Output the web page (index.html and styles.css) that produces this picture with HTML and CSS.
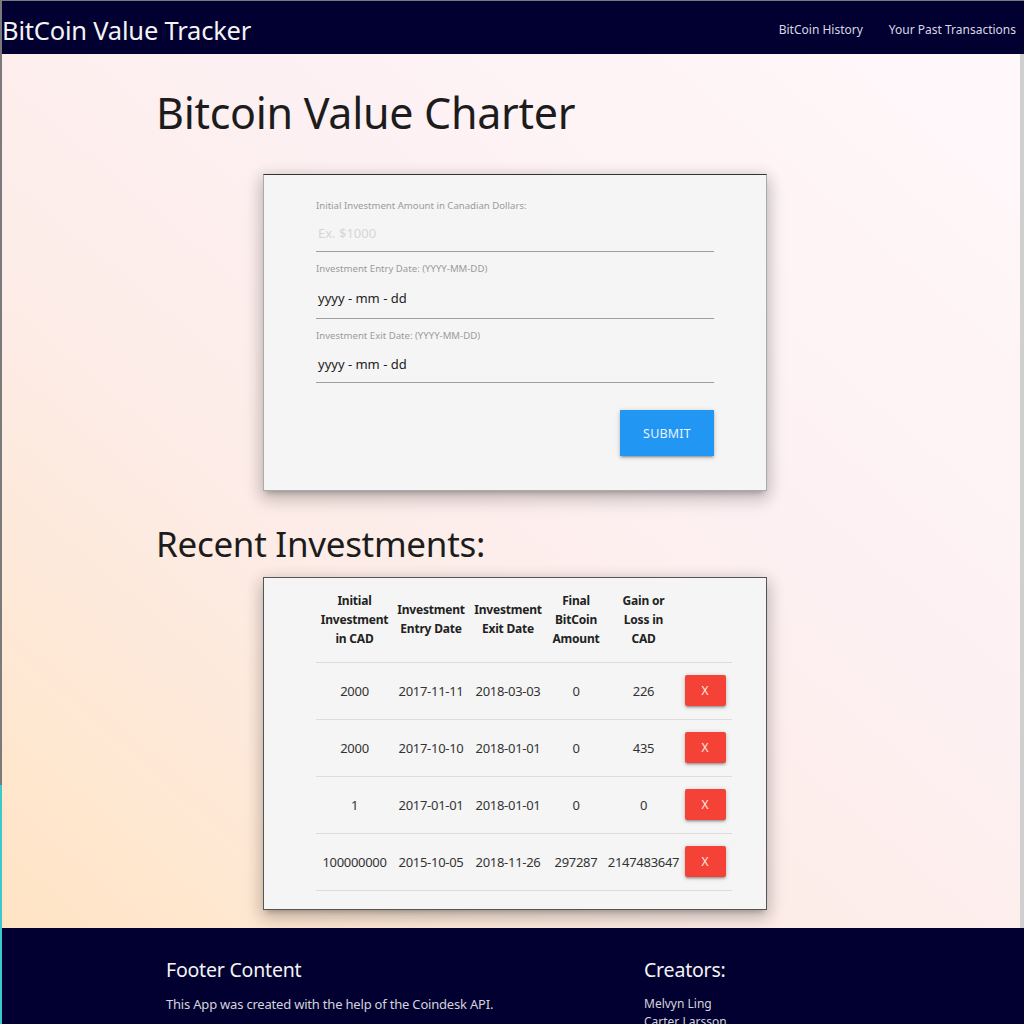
FILE: index.html
```html
<!DOCTYPE html>
<html lang="en">
<head>
<meta charset="utf-8">
<title>BitCoin Value Tracker</title>
<link rel="stylesheet" href="styles.css">
</head>
<body>
<div class="frame">
  <nav class="navbar">
    <a class="brand" href="#">BitCoin Value Tracker</a>
    <ul class="nav-links">
      <li><a href="#">BitCoin History</a></li>
      <li><a href="#">Your Past Transactions</a></li>
    </ul>
  </nav>
  <main class="main">
    <div class="container">
      <h1 class="title">Bitcoin Value Charter</h1>
      <form class="card form-card">
        <div class="field f1">
          <label class="field-label">Initial Investment Amount in Canadian Dollars:</label>
          <div class="field-input placeholder">Ex. $1000</div>
        </div>
        <div class="field f2">
          <label class="field-label">Investment Entry Date: (YYYY-MM-DD)</label>
          <div class="field-input">yyyy - mm - dd</div>
        </div>
        <div class="field f3">
          <label class="field-label">Investment Exit Date: (YYYY-MM-DD)</label>
          <div class="field-input">yyyy - mm - dd</div>
        </div>
        <div class="actions">
          <button type="button" class="btn btn-blue">SUBMIT</button>
        </div>
      </form>
      <h2 class="subtitle">Recent Investments:</h2>
      <div class="card table-card">
        <table class="inv-table">
          <colgroup>
            <col class="c1"><col class="c2"><col class="c3"><col class="c4"><col class="c5"><col class="c6">
          </colgroup>
          <thead>
            <tr>
              <th>Initial Investment in CAD</th>
              <th>Investment Entry Date</th>
              <th>Investment Exit Date</th>
              <th>Final BitCoin Amount</th>
              <th class="th-narrow">Gain or Loss in CAD</th>
              <th></th>
            </tr>
          </thead>
          <tbody>
            <tr><td>2000</td><td>2017-11-11</td><td>2018-03-03</td><td>0</td><td>226</td><td><button type="button" class="btn btn-red">X</button></td></tr>
            <tr><td>2000</td><td>2017-10-10</td><td>2018-01-01</td><td>0</td><td>435</td><td><button type="button" class="btn btn-red">X</button></td></tr>
            <tr><td>1</td><td>2017-01-01</td><td>2018-01-01</td><td>0</td><td>0</td><td><button type="button" class="btn btn-red">X</button></td></tr>
            <tr><td>100000000</td><td>2015-10-05</td><td>2018-11-26</td><td>297287</td><td>2147483647</td><td><button type="button" class="btn btn-red">X</button></td></tr>
          </tbody>
        </table>
      </div>
    </div>
  </main>
  <footer class="footer">
    <div class="footer-inner">
      <div class="footer-col left">
        <h5 class="footer-title">Footer Content</h5>
        <p class="footer-text">This App was created with the help of the Coindesk API.</p>
      </div>
      <div class="footer-col right">
        <h5 class="footer-title">Creators:</h5>
        <ul class="creators">
          <li>Melvyn Ling</li>
          <li>Carter Larsson</li>
        </ul>
      </div>
    </div>
  </footer>
</div>
</body>
</html>
```

FILE: styles.css
```css
* { box-sizing: border-box; }
html, body { margin: 0; padding: 0; }
body {
  font-family: "Noto Sans", "Open Sans", sans-serif;
  background: #020030;
  color: #222;
  height: 1024px;
  overflow: hidden;
}
.frame {
  border-top: 1px solid #3a3a3a;
  border-left: 2px solid #888;
  border-image: linear-gradient(to bottom, #7a7a7a 76.6%, #3cc8cc 76.6%) 1;
  border-right: 0;
  border-bottom: 0;
}
.navbar {
  height: 53px;
  background: #020030;
  display: flex;
  align-items: center;
  justify-content: space-between;
}
.brand {
  color: #f4f4f4;
  text-decoration: none;
  font-size: 25.5px;
  letter-spacing: -0.2px;
  padding-top: 4px;
}
.nav-links {
  list-style: none;
  margin: 0;
  padding: 0 8px 0 0;
  display: flex;
  gap: 26px;
}
.nav-links a {
  color: #d8d8e4;
  text-decoration: none;
  font-size: 12px;
}
.main {
  background: linear-gradient(to top right, #ffe4c4 0%, #fdece6 35%, #fdf0f2 60%, #fff8fa 100%);
  border-right: 4px solid #cfcfcf;
  height: 874px;
  padding-top: 31px;
}
.container {
  margin-left: 154px;
  width: 612px;
}
.title {
  font-weight: 400;
  font-size: 43px;
  margin: 0 0 33px 0;
  line-height: 56px;
  color: #1c1c1c;
  letter-spacing: -0.3px;
}
.card {
  background: #f5f5f5;
  border: 1px solid #555;
  box-shadow: 0 8px 17px 2px rgba(0,0,0,0.14), 0 3px 14px 2px rgba(0,0,0,0.12), 0 5px 5px -3px rgba(0,0,0,0.2);
  margin-left: 107px;
  width: 504px;
}
.form-card {
  border-color: #aaa;
  border-top-color: #333;
  height: 317px;
  padding: 25px 52px 0 52px;
}
.field { display: flex; flex-direction: column; }
.field-label {
  font-size: 9.6px;
  color: #9b9b9b;
  line-height: 12px;
}
.field-input {
  border-bottom: 1px solid #9e9e9e;
  font-size: 13px;
  line-height: 14px;
  padding: 0 2px;
  color: #222;
}
.f1 .field-input { height: 40px; padding-top: 14px; margin-bottom: 11px; }
.f2 .field-input { height: 44px; padding-top: 16px; margin-bottom: 11px; }
.f3 .field-input { height: 41px; padding-top: 15px; }
.placeholder { color: #d6d6d6; }
.actions {
  display: flex;
  justify-content: flex-end;
  margin-top: 27px;
}
.btn {
  border: none;
  color: #fff;
  font-family: inherit;
  cursor: pointer;
  box-shadow: 0 2px 2px 0 rgba(0,0,0,0.14), 0 3px 1px -2px rgba(0,0,0,0.12), 0 1px 5px 0 rgba(0,0,0,0.2);
}
.btn-blue {
  background: #2196f3;
  width: 94px;
  height: 46px;
  font-size: 12.5px;
  letter-spacing: 0.2px;
  color: #e8f3ff;
}
.subtitle {
  font-weight: 400;
  font-size: 35px;
  margin: 30px 0 10px 0;
  line-height: 46px;
  color: #1c1c1c;
  letter-spacing: -0.3px;
}
.table-card {
  height: 333px;
  padding: 7px 34px 0 52px;
}
.inv-table {
  border-collapse: collapse;
  table-layout: fixed;
  width: 416px;
}
col.c1 { width: 77px; }
col.c2 { width: 76px; }
col.c3 { width: 78px; }
col.c4 { width: 58px; }
col.c5 { width: 77px; }
col.c6 { width: 50px; }
.inv-table th {
  font-size: 12px;
  font-weight: 700;
  line-height: 19px;
  color: #222;
  height: 77px;
  padding: 0 1px 8px 1px;
  text-align: center;
  vertical-align: middle;
  border-bottom: 1px solid #ddd;
  letter-spacing: -0.2px;
}
.inv-table th.th-narrow { padding-left: 10px; padding-right: 10px; }
.inv-table td {
  font-size: 13px;
  color: #333;
  text-align: center;
  height: 57px;
  padding: 0;
  border-bottom: 1px solid #ddd;
  white-space: nowrap;
  letter-spacing: -0.3px;
}
.btn-red {
  background: #f44336;
  width: 41px;
  height: 31px;
  font-size: 12px;
  border-radius: 2px;
  color: #ffeaea;
  margin-right: 4px;
}
.footer {
  background: #020030;
  height: 96px;
  color: #fff;
}
.footer-inner {
  display: flex;
  padding: 29px 0 0 164px;
}
.footer-col.left { width: 478px; }
.footer-title {
  font-size: 19.5px;
  font-weight: 400;
  margin: 0 0 12px 0;
  line-height: 26px;
  color: #f4f4f4;
  letter-spacing: -0.2px;
}
.footer-text {
  font-size: 13px;
  color: #d4d4dc;
  margin: 0;
  line-height: 18px;
  letter-spacing: -0.2px;
}
.creators {
  list-style: none;
  margin: 0;
  padding: 0;
  font-size: 12px;
  color: #d4d4dc;
  line-height: 18px;
}
```
